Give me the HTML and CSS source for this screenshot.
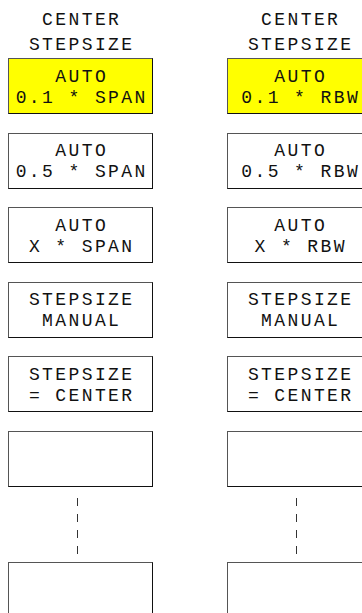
FILE: index.html
```html
<!DOCTYPE html>
<html lang="en">
<head>
  <meta charset="UTF-8" />
  <meta name="viewport" content="width=device-width, initial-scale=1.0" />
  <title>CENTER STEPSIZE</title>
  <link rel="stylesheet" href="styles.css">
</head>
<body>
  <div class="menus">
    <div class="menu">
      <div class="title">CENTER<br>STEPSIZE</div>
      <div class="key active">AUTO<br>0.1 * SPAN</div>
      <div class="key">AUTO<br>0.5 * SPAN</div>
      <div class="key">AUTO<br>X * SPAN</div>
      <div class="key">STEPSIZE<br>MANUAL</div>
      <div class="key">STEPSIZE<br>= CENTER</div>
      <div class="key"></div>
      <div class="more"></div>
      <div class="key"></div>
    </div>
    <div class="menu">
      <div class="title">CENTER<br>STEPSIZE</div>
      <div class="key active">AUTO<br>0.1 * RBW</div>
      <div class="key">AUTO<br>0.5 * RBW</div>
      <div class="key">AUTO<br>X * RBW</div>
      <div class="key">STEPSIZE<br>MANUAL</div>
      <div class="key">STEPSIZE<br>= CENTER</div>
      <div class="key"></div>
      <div class="more"></div>
      <div class="key"></div>
    </div>
  </div>
</body>
</html>
```

FILE: styles.css
```css
body {
  margin: 0;
  background: #fff;
  color: #111;
  font-family: "Liberation Mono", "DejaVu Sans Mono", monospace;
  font-size: 18px;
  overflow: hidden;
}
.menus {
  display: flex;
  gap: 74px;
  padding-left: 8px;
  height: 613px;
  overflow: hidden;
}
.menu {
  flex: 0 0 145px;
  display: flex;
  flex-direction: column;
}
.title {
  padding-top: 8px;
  padding-left: 2.4px;
  height: 50px;
  line-height: 25px;
  text-align: center;
  letter-spacing: 2.4px;
}
.key {
  box-sizing: border-box;
  height: 56px;
  flex: 0 0 56px;
  margin-bottom: 18.6px;
  border: 1px solid #111;
  border-top-color: #555;
  border-left-color: #555;
  padding: 3px 0 0 2.4px;
  line-height: 21px;
  letter-spacing: 2.4px;
  text-align: center;
  display: flex;
  align-items: center;
  justify-content: center;
}
.key.active {
  background: #ffff00;
}
.more {
  flex: 0 0 75px;
  margin-top: -18.6px;
  height: 75px;
  background: repeating-linear-gradient(to bottom, #333 0 8px, transparent 8px 16px) 69px 11px / 1px 64px no-repeat;
}
```
